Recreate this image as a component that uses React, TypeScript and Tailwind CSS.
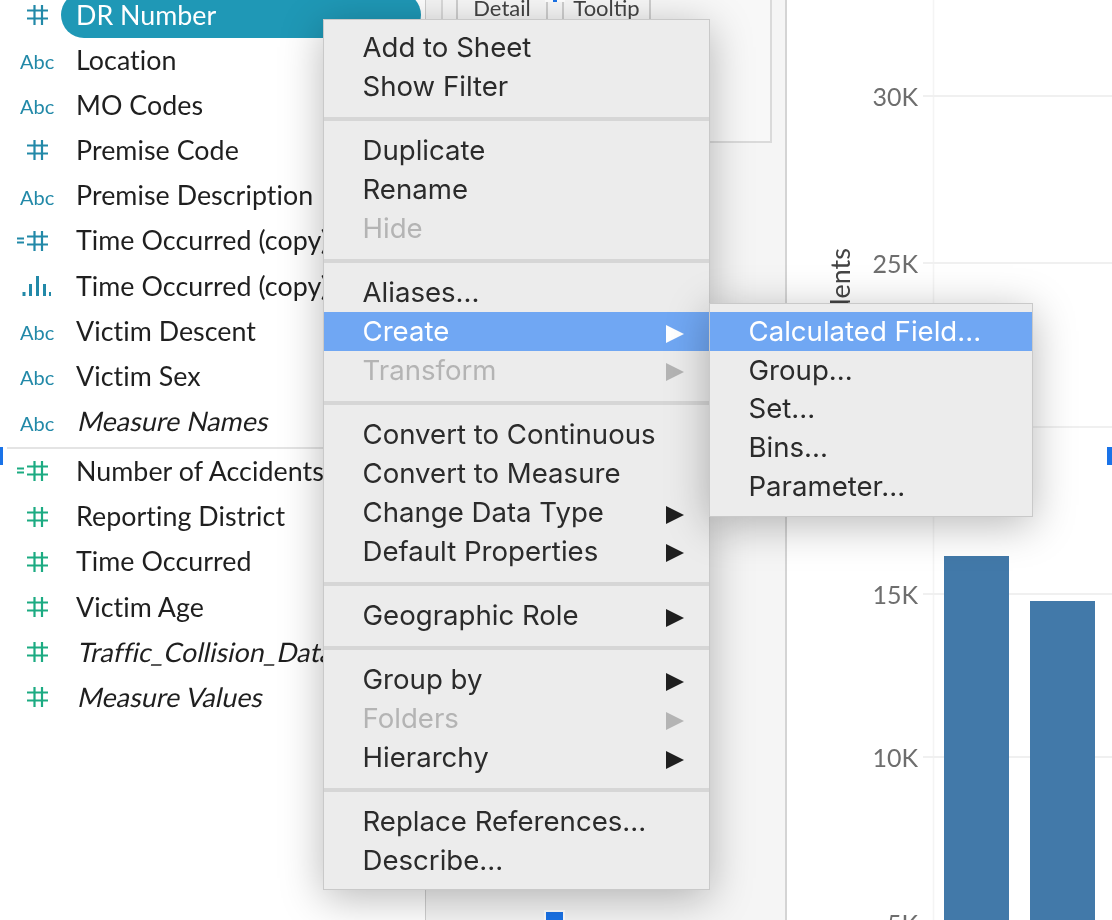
import React from "react";

const TEAL = "#2289a8";
const GREEN = "#1cab82";

function Hash({ color, eq }: { color: string; eq?: boolean }) {
  return (
    <svg width="34" height="22" viewBox="0 0 34 22" className="shrink-0">
      <g stroke={color} strokeWidth="2.2" fill="none">
        <path d="M10 6.5H31M10 14.5H31M17.5 1V21M25 1V21" />
        {eq && <path d="M0 8.5H7M0 12.5H7" />}
      </g>
    </svg>
  );
}

function Bars({ color }: { color: string }) {
  return (
    <svg width="34" height="22" viewBox="0 0 34 22" className="shrink-0">
      <g fill={color}>
        <rect x="5.5" y="17" width="3" height="4" />
        <rect x="12" y="9" width="3" height="12" />
        <rect x="19" y="1" width="3" height="20" />
        <rect x="26" y="9" width="3" height="12" />
        <rect x="32" y="17" width="2" height="4" />
      </g>
    </svg>
  );
}

function Abc() {
  return (
    <span className="w-[34px] shrink-0 translate-x-[3px] translate-y-[1px] text-center text-[20px] text-[#2289a8] font-['Lato',sans-serif] leading-none">
      Abc
    </span>
  );
}

type Row = { icon: "hash" | "abc" | "eq" | "bars"; label: string; italic?: boolean };

const dims: Row[] = [
  { icon: "abc", label: "Location" },
  { icon: "abc", label: "MO Codes" },
  { icon: "hash", label: "Premise Code" },
  { icon: "abc", label: "Premise Description" },
  { icon: "eq", label: "Time Occurred (copy)" },
  { icon: "bars", label: "Time Occurred (copy)" },
  { icon: "abc", label: "Victim Descent" },
  { icon: "abc", label: "Victim Sex" },
  { icon: "abc", label: "Measure Names", italic: true },
];

const measures: Row[] = [
  { icon: "eq", label: "Number of Accidents" },
  { icon: "hash", label: "Reporting District" },
  { icon: "hash", label: "Time Occurred" },
  { icon: "hash", label: "Victim Age" },
  { icon: "hash", label: "Traffic_Collision_Data (Count)", italic: true },
  { icon: "hash", label: "Measure Values", italic: true },
];

function FieldRow({ row, color }: { row: Row; color: string }) {
  return (
    <div className="flex h-[45.2px] items-center pl-[17px] whitespace-nowrap">
      {row.icon === "abc" && <Abc />}
      {row.icon === "hash" && <Hash color={color} />}
      {row.icon === "eq" && <Hash color={color} eq />}
      {row.icon === "bars" && <Bars color={color} />}
      <span
        className={`ml-[25px] text-[26.8px] tracking-[0.05px] text-[#1f1f1f] leading-none ${
          row.italic ? "inline-block origin-bottom-left -skew-x-[12deg]" : ""
        }`}
      >
        {row.label}
      </span>
    </div>
  );
}

function Arrow({ color }: { color: string }) {
  return (
    <svg width="18" height="18" viewBox="0 0 18 18" className="shrink-0 translate-y-[2px]">
      <polygon points="0,0 18,9 0,18" fill={color} />
    </svg>
  );
}

type Item = { t: string; arrow?: boolean; off?: boolean; hi?: boolean };

function MenuItem({ item }: { item: Item }) {
  const tone = item.hi ? "bg-[#70a7f3] text-white" : item.off ? "text-[#b4b4b4]" : "text-[#2b2b2b]";
  const arrow = item.hi ? "#ffffff" : item.off ? "#b4b4b4" : "#1f1f1f";
  return (
    <div className={`flex h-[38.9px] items-center justify-between pl-[38.5px] pr-[25px] ${tone}`}>
      <span>{item.t}</span>
      {item.arrow && <Arrow color={arrow} />}
    </div>
  );
}

function Sep() {
  return <div className="mt-[11px] mb-[10.4px] h-[4px] bg-[#d6d6d6]" />;
}

const groups: Item[][] = [
  [{ t: "Add to Sheet" }, { t: "Show Filter" }],
  [{ t: "Duplicate" }, { t: "Rename" }, { t: "Hide", off: true }],
  [
    { t: "Aliases..." },
    { t: "Create", arrow: true, hi: true },
    { t: "Transform", arrow: true, off: true },
  ],
  [
    { t: "Convert to Continuous" },
    { t: "Convert to Measure" },
    { t: "Change Data Type", arrow: true },
    { t: "Default Properties", arrow: true },
  ],
  [{ t: "Geographic Role", arrow: true }],
  [{ t: "Group by", arrow: true }, { t: "Folders", arrow: true, off: true }, { t: "Hierarchy", arrow: true }],
  [{ t: "Replace References..." }, { t: "Describe..." }],
];

const sub: Item[] = [
  { t: "Calculated Field...", hi: true },
  { t: "Group..." },
  { t: "Set..." },
  { t: "Bins..." },
  { t: "Parameter..." },
];

const ticks = [
  { y: 96, t: "30K" },
  { y: 263, t: "25K" },
  { y: 427, t: "20K" },
  { y: 594, t: "15K" },
  { y: 757, t: "10K" },
  { y: 923, t: "5K" },
];

function Chart() {
  return (
    <svg width="325" height="920" viewBox="787 0 325 920" className="block shrink-0 font-['Lato',sans-serif]">
      <line x1="933.5" y1="0" x2="933.5" y2="920" stroke="#f4f4f4" strokeWidth="1.5" />
      {ticks.map((k) => (
        <g key={k.t}>
          <line x1="923" y1={k.y} x2="1112" y2={k.y} stroke="#f0f0f0" strokeWidth="2" />
          <text x="918" y={k.y + 9.5} textAnchor="end" fontSize="25" fill="#6e6e6e">
            {k.t}
          </text>
        </g>
      ))}
      <text x="850" y="248" textAnchor="end" fontSize="27" fill="#444444" transform="rotate(-90 850 248)">
        Number of Accidents
      </text>
      <rect x="944" y="556" width="65" height="364" fill="#4279a9" />
      <rect x="1030" y="601" width="65" height="319" fill="#4279a9" />
    </svg>
  );
}

export default function App() {
  return (
    <div className="relative flex h-[920px] w-[1112px] overflow-hidden bg-white font-['Lato',sans-serif] blur-[0.4px]">
      <aside className="w-[425px] shrink-0 overflow-hidden border-r-2 border-[#cfcfcf] box-content -mr-px">
        <div className="-mt-[7.7px]">
          <div className="flex h-[45.2px] items-center pl-[17px] whitespace-nowrap">
            <Hash color={TEAL} />
            <span className="ml-[10px] flex h-[45.6px] w-[360px] shrink-0 items-center rounded-full bg-[#1f98b6] pl-[15px] text-[26.8px] text-white leading-none">
              DR Number
            </span>
          </div>
          {dims.map((r, i) => (
            <FieldRow key={i} row={r} color={TEAL} />
          ))}
          <div className="flex h-[4.6px] items-end pl-[7px]">
            <div className="h-[2px] w-full bg-[#e4e4e4]" />
          </div>
          {measures.map((r, i) => (
            <FieldRow key={i} row={r} color={GREEN} />
          ))}
        </div>
      </aside>

      <section className="w-[359px] shrink-0 overflow-hidden border-r-2 border-[#d4d4d4] box-content bg-[#f5f5f5]">
        <div className="-mt-[20px] ml-[15px] h-[163px] w-[331px] border-2 border-[#dadada] bg-[#f8f8f8] pl-[13px]">
          <div className="flex gap-[14px] text-[22px] text-[#444444] leading-none">
            <div className="flex h-[60px] w-[92px] items-start justify-center border-x-2 border-[#cfcfcf] pt-[15px]">Detail</div>
            <div className="flex h-[60px] w-[89px] items-start justify-center border-x-2 border-[#cfcfcf] pt-[15px]">Tooltip</div>
          </div>
        </div>
      </section>

      <Chart />

      <div className="absolute left-0 top-[447px] h-[18px] w-[3px] bg-[#1a73e8]" />
      <div className="absolute left-[1107px] top-[447px] h-[18px] w-[5px] bg-[#1a73e8]" />
      <div className="absolute left-[544px] top-[910px] h-[10px] w-[21px] border-x-2 border-t-2 border-white bg-[#1a73e8]" />
      <div className="absolute left-[545px] top-0 h-[2px] w-[20px] bg-white">
        <div className="mx-auto h-[2px] w-[4px] bg-[#1a73e8]" />
      </div>

      <div className="absolute left-[323px] top-[19px] w-[387px] border border-[#c9c9c9] bg-[#ececec] pt-[8px] pb-[9px] text-[27.6px] leading-none font-['Inter',sans-serif] shadow-[0_8px_40px_rgba(0,0,0,0.28)]">
        {groups.map((g, i) => (
          <div key={i}>
            {i > 0 && <Sep />}
            {g.map((it) => (
              <MenuItem key={it.t} item={it} />
            ))}
          </div>
        ))}
      </div>

      <div className="absolute left-[709px] top-[303px] w-[324px] border border-[#c9c9c9] bg-[#ececec] pt-[8px] pb-[10px] text-[27.6px] leading-none font-['Inter',sans-serif] shadow-[0_8px_40px_rgba(0,0,0,0.28)]">
        {sub.map((it) => (
          <MenuItem key={it.t} item={it} />
        ))}
      </div>
    </div>
  );
}
